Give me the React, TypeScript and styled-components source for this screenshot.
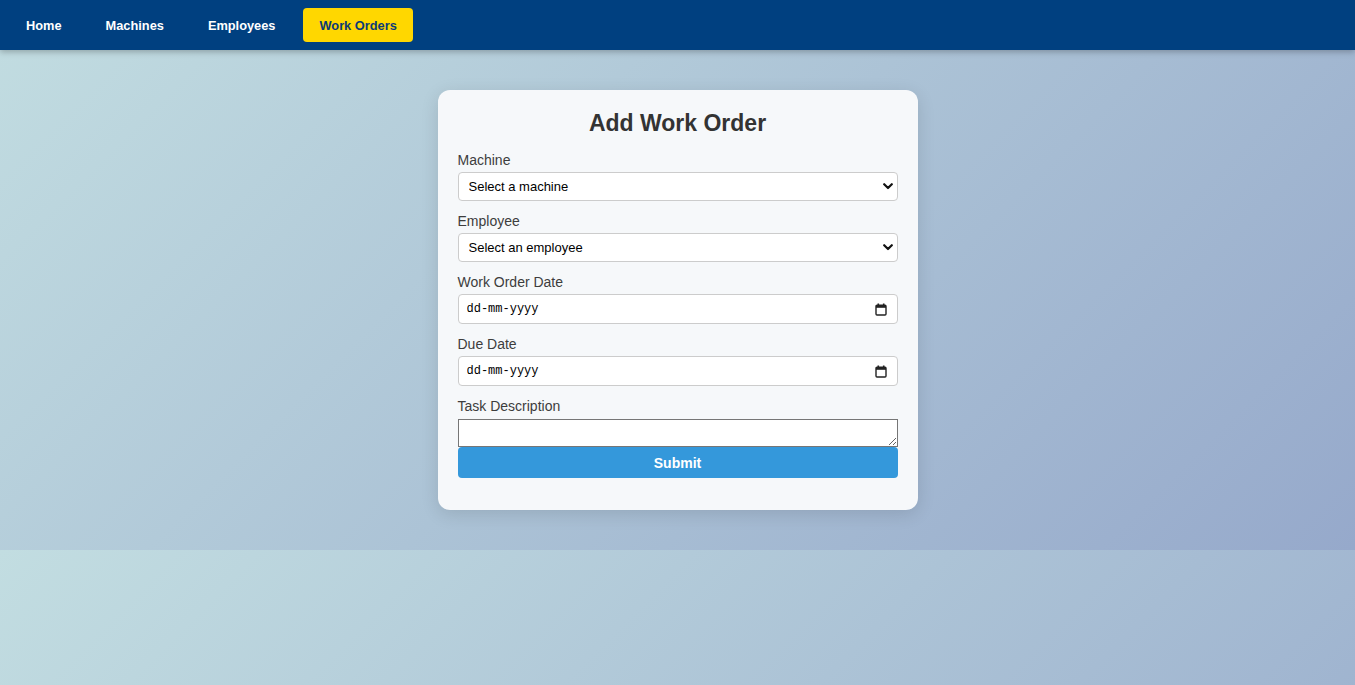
import React from "react";
import styled, { createGlobalStyle } from "styled-components";

const GlobalStyle = createGlobalStyle`
  body {
    margin: 0;
    font-family: "Liberation Sans", Arial, sans-serif;
    background: linear-gradient(135deg, #c2dde1 0%, #96a9cb 100%);
  }
  * { box-sizing: border-box; }
`;

const Nav = styled.nav`
  height: 50px;
  background: #004080;
  display: flex;
  align-items: center;
  gap: 12px;
  padding: 0 10px;
  box-shadow: 0 2px 6px rgba(0, 0, 0, 0.25);
  position: relative;
  z-index: 1;
`;

const NavLink = styled.a<{ $active?: boolean }>`
  display: block;
  padding: 11px 16px 9px;
  border-radius: 4px;
  font-size: 12.8px;
  font-weight: bold;
  line-height: 14px;
  text-decoration: none;
  color: ${(p) => (p.$active ? "#0b3a78" : "#ffffff")};
  background: ${(p) => (p.$active ? "#ffd700" : "transparent")};
  cursor: pointer;
`;

const Main = styled.main`
  padding: 40px 0;
  display: flex;
  justify-content: center;
`;

const Card = styled.form`
  width: 480px;
  padding: 20px 20px 32px;
  background: #f6f8fa;
  border-radius: 12px;
  box-shadow: 0 4px 18px rgba(0, 0, 0, 0.12);
`;

const Title = styled.h2`
  margin: 0 0 15px;
  text-align: center;
  font-size: 23px;
  font-weight: bold;
  color: #333333;
`;

const Group = styled.div`
  margin-bottom: 12px;
`;

const Label = styled.label<{ $tight?: boolean }>`
  display: block;
  font-size: 14px;
  color: #3d3d3d;
  margin-bottom: ${(p) => (p.$tight ? "5px" : "4px")};
`;

const SelectWrap = styled.div`
  position: relative;
`;

const Select = styled.select`
  appearance: none;
  -webkit-appearance: none;
  width: 100%;
  height: 29px;
  padding: 0 10px;
  border: 1px solid #cccccc;
  border-radius: 4px;
  background: #ffffff;
  font-family: "Liberation Sans", Arial, sans-serif;
  font-size: 13px;
  color: #000000;
`;

const Chevron = styled.svg`
  position: absolute;
  right: 5px;
  top: 11px;
  pointer-events: none;
`;

const DateField = styled.div`
  display: flex;
  align-items: center;
  height: 30px;
  padding: 0 10px 0 8px;
  border: 1px solid #cccccc;
  border-radius: 4px;
  background: #ffffff;
`;

const DateInput = styled.input`
  flex: 1;
  border: none;
  outline: none;
  padding: 0;
  background: transparent;
  font-family: "Liberation Mono", monospace;
  font-size: 12px;
  color: #000000;
  &::placeholder {
    color: #000000;
  }
`;

const TextArea = styled.textarea`
  display: block;
  width: 100%;
  height: 28px;
  margin: 0;
  border: 1px solid #767676;
  background: #ffffff;
  resize: vertical;
  font-family: "Liberation Mono", monospace;
  font-size: 13px;
`;

const SubmitButton = styled.button`
  display: block;
  width: 100%;
  height: 31px;
  border: none;
  border-radius: 4px;
  background: #3498db;
  color: #ffffff;
  font-family: "Liberation Sans", Arial, sans-serif;
  font-size: 14px;
  font-weight: bold;
  cursor: pointer;
`;

const ChevronIcon = () => (
  <Chevron width="10" height="7" viewBox="0 0 10 7">
    <path d="M1.2 1.2 L5 5 L8.8 1.2" fill="none" stroke="#111" strokeWidth="2.2" strokeLinecap="round" strokeLinejoin="round" />
  </Chevron>
);

const CalendarIcon = () => (
  <svg width="12" height="13" viewBox="0 0 12 13">
    <rect x="2.5" y="0.5" width="1.6" height="2.5" fill="#222" />
    <rect x="7.9" y="0.5" width="1.6" height="2.5" fill="#222" />
    <rect x="1" y="2.2" width="10" height="9.8" rx="1" fill="none" stroke="#222" strokeWidth="1.4" />
    <rect x="1" y="2.2" width="10" height="2.6" fill="#222" />
  </svg>
);

export default function App() {
  return (
    <>
      <GlobalStyle />
      <Nav>
        <NavLink>Home</NavLink>
        <NavLink>Machines</NavLink>
        <NavLink>Employees</NavLink>
        <NavLink $active>Work Orders</NavLink>
      </Nav>
      <Main>
        <Card onSubmit={(e) => e.preventDefault()}>
          <Title>Add Work Order</Title>
          <Group>
            <Label>Machine</Label>
            <SelectWrap>
              <Select defaultValue="">
                <option value="">Select a machine</option>
              </Select>
              <ChevronIcon />
            </SelectWrap>
          </Group>
          <Group>
            <Label>Employee</Label>
            <SelectWrap>
              <Select defaultValue="">
                <option value="">Select an employee</option>
              </Select>
              <ChevronIcon />
            </SelectWrap>
          </Group>
          <Group>
            <Label>Work Order Date</Label>
            <DateField>
              <DateInput type="text" placeholder="dd-mm-yyyy" />
              <CalendarIcon />
            </DateField>
          </Group>
          <Group>
            <Label>Due Date</Label>
            <DateField>
              <DateInput type="text" placeholder="dd-mm-yyyy" />
              <CalendarIcon />
            </DateField>
          </Group>
          <Label $tight>Task Description</Label>
          <TextArea />
          <SubmitButton type="submit">Submit</SubmitButton>
        </Card>
      </Main>
    </>
  );
}
